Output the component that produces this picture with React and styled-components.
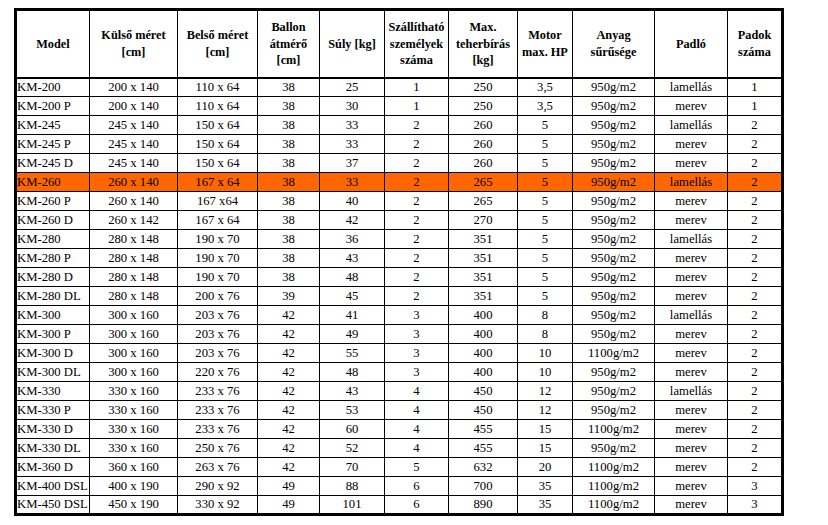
import React from 'react';
import styled, { createGlobalStyle } from 'styled-components';

const columns = [
  { title: ['Model'], width: 74 },
  { title: ['Külső méret', '[cm]'], width: 88 },
  { title: ['Belső méret', '[cm]'], width: 80 },
  { title: ['Ballon', 'átmérő', '[cm]'], width: 62 },
  { title: ['Súly [kg]'], width: 65 },
  { title: ['Szállítható', 'személyek', 'száma'], width: 64 },
  { title: ['Max.', 'teherbírás', '[kg]'], width: 69 },
  { title: ['Motor', 'max. HP'], width: 55 },
  { title: ['Anyag', 'sűrűsége'], width: 82 },
  { title: ['Padló'], width: 73 },
  { title: ['Padok', 'száma'], width: 55 },
];

const rows = [
  ['KM-200', '200 x 140', '110 x 64', '38', '25', '1', '250', '3,5', '950g/m2', 'lamellás', '1'],
  ['KM-200 P', '200 x 140', '110 x 64', '38', '30', '1', '250', '3,5', '950g/m2', 'merev', '1'],
  ['KM-245', '245 x 140', '150 x 64', '38', '33', '2', '260', '5', '950g/m2', 'lamellás', '2'],
  ['KM-245 P', '245 x 140', '150 x 64', '38', '33', '2', '260', '5', '950g/m2', 'merev', '2'],
  ['KM-245 D', '245 x 140', '150 x 64', '38', '37', '2', '260', '5', '950g/m2', 'merev', '2'],
  ['KM-260', '260 x 140', '167 x 64', '38', '33', '2', '265', '5', '950g/m2', 'lamellás', '2'],
  ['KM-260 P', '260 x 140', '167 x64', '38', '40', '2', '265', '5', '950g/m2', 'merev', '2'],
  ['KM-260 D', '260 x 142', '167 x 64', '38', '42', '2', '270', '5', '950g/m2', 'merev', '2'],
  ['KM-280', '280 x 148', '190 x 70', '38', '36', '2', '351', '5', '950g/m2', 'lamellás', '2'],
  ['KM-280 P', '280 x 148', '190 x 70', '38', '43', '2', '351', '5', '950g/m2', 'merev', '2'],
  ['KM-280 D', '280 x 148', '190 x 70', '38', '48', '2', '351', '5', '950g/m2', 'merev', '2'],
  ['KM-280 DL', '280 x 148', '200 x 76', '39', '45', '2', '351', '5', '950g/m2', 'merev', '2'],
  ['KM-300', '300 x 160', '203 x 76', '42', '41', '3', '400', '8', '950g/m2', 'lamellás', '2'],
  ['KM-300 P', '300 x 160', '203 x 76', '42', '49', '3', '400', '8', '950g/m2', 'merev', '2'],
  ['KM-300 D', '300 x 160', '203 x 76', '42', '55', '3', '400', '10', '1100g/m2', 'merev', '2'],
  ['KM-300 DL', '300 x 160', '220 x 76', '42', '48', '3', '400', '10', '950g/m2', 'merev', '2'],
  ['KM-330', '330 x 160', '233 x 76', '42', '43', '4', '450', '12', '950g/m2', 'lamellás', '2'],
  ['KM-330 P', '330 x 160', '233 x 76', '42', '53', '4', '450', '12', '950g/m2', 'merev', '2'],
  ['KM-330 D', '330 x 160', '233 x 76', '42', '60', '4', '455', '15', '1100g/m2', 'merev', '2'],
  ['KM-330 DL', '330 x 160', '250 x 76', '42', '52', '4', '455', '15', '950g/m2', 'merev', '2'],
  ['KM-360 D', '360 x 160', '263 x 76', '42', '70', '5', '632', '20', '1100g/m2', 'merev', '2'],
  ['KM-400 DSL', '400 x 190', '290 x 92', '49', '88', '6', '700', '35', '1100g/m2', 'merev', '3'],
  ['KM-450 DSL', '450 x 190', '330 x 92', '49', '101', '6', '890', '35', '1100g/m2', 'merev', '3'],
];

const highlighted = 'KM-260';

const App = () => {
  return (
    <>
      <GlobalStyle />
      <Page>
        <Table>
          <colgroup>
            {columns.map((col, i) => (
              <col key={i} style={{ width: col.width }} />
            ))}
          </colgroup>
          <thead>
            <HeadRow>
              {columns.map((col, i) => (
                <HeadCell key={i}>
                  {col.title.map((line, j) => (
                    <div key={j}>{line}</div>
                  ))}
                </HeadCell>
              ))}
            </HeadRow>
          </thead>
          <tbody>
            {rows.map((row) => (
              <DataRow key={row[0]} $active={row[0] === highlighted}>
                {row.map((value, i) => (
                  <Cell key={i} $left={i === 0}>
                    {value}
                  </Cell>
                ))}
              </DataRow>
            ))}
          </tbody>
        </Table>
      </Page>
    </>
  );
};

const GlobalStyle = createGlobalStyle`
  body {
    margin: 0;
    background: #ffffff;
    font-family: 'Liberation Serif', 'Times New Roman', serif;
    color: #000000;
  }
`;

const Page = styled.div`
  padding: 8px 0 0 14px;
`;

const Table = styled.table`
  width: 770px;
  table-layout: fixed;
  border-collapse: collapse;
  border: 3px solid #000000;
`;

const HeadRow = styled.tr`
  height: 68px;
`;

const HeadCell = styled.th`
  border: 1px solid #000000;
  border-bottom: 2px solid #000000;
  padding: 0;
  font-size: 12.3px;
  font-weight: bold;
  line-height: 16.5px;
  text-align: center;
  vertical-align: middle;
`;

const DataRow = styled.tr`
  height: 19px;
  background: ${({ $active }) => ($active ? '#ff6600' : '#ffffff')};
`;

const Cell = styled.td`
  border: 1px solid #000000;
  padding: 0;
  font-size: 12.7px;
  line-height: 17px;
  white-space: nowrap;
  overflow: hidden;
  text-align: ${({ $left }) => ($left ? 'left' : 'center')};
  vertical-align: middle;
`;

export default App;
